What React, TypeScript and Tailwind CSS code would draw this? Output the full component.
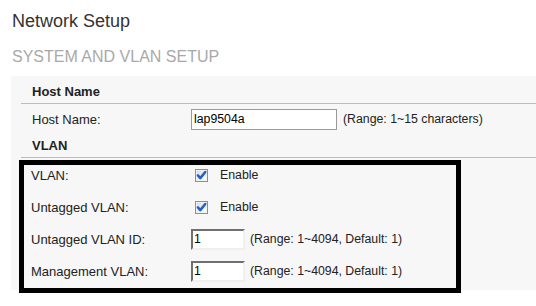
const FONT = { fontFamily: '"Liberation Sans", Arial, sans-serif' }

function CheckMark() {
  return (
    <svg width="13" height="13" viewBox="0 0 13 13" className="ml-[4px] shrink-0">
      <defs>
        <linearGradient id="cbg" x1="0" y1="0" x2="1" y2="1">
          <stop offset="0" stopColor="#dcdcdc" />
          <stop offset="1" stopColor="#ffffff" />
        </linearGradient>
      </defs>
      <rect x="0.5" y="0.5" width="12" height="12" fill="#f2f2f2" stroke="#8e8f8f" />
      <rect x="2" y="2" width="9" height="9" fill="url(#cbg)" />
      <path d="M2.9 6.4 L5.3 9.1 L10.3 3" fill="none" stroke="#1f5fd0" strokeWidth="2.5" strokeLinecap="round" strokeLinejoin="round" />
    </svg>
  )
}

function SmallInput({ value }: { value: string }) {
  return (
    <div className="w-[54px] h-[21px] bg-white border-2 border-t-[#6f6f6f] border-l-[#6f6f6f] border-r-[#f0f0f0] border-b-[#f0f0f0] pl-[1px] flex items-center text-[12.3px] text-black">
      {value}
    </div>
  )
}

function Row({ label, children }: { label: string; children: React.ReactNode }) {
  return (
    <div className="h-[21px] flex items-center">
      <div className="w-[160px] text-[13px] text-[#222]">{label}</div>
      {children}
    </div>
  )
}

export default function App() {
  return (
    <div className="w-[536px] h-[306px] bg-white overflow-hidden" style={FONT}>
      <h1 className="pt-[10px] pl-[12px] text-[18px] leading-[22px] text-[#333]">Network Setup</h1>
      <h2 className="mt-[15px] pl-[12px] text-[16px] leading-[20px] text-[#a9a9a9]">SYSTEM AND VLAN SETUP</h2>

      <div className="mt-[9px] ml-[11px] h-[214px] bg-[#f7f7f7]">
        <div className="ml-[10px] pt-[8px] pb-[3px] pl-[11px] border-b border-[#bdbdbd] text-[13px] leading-[16px] font-bold text-[#222]">
          Host Name
        </div>
        <div className="pt-[5px] pl-[21px] h-[26px] flex items-center">
          <div className="w-[159px] text-[13px] text-[#222]">Host Name:</div>
          <div className="w-[146px] h-[21px] bg-white border border-[#9a9a9a] pl-[2px] flex items-center text-[12.3px] text-black">
            lap9504a
          </div>
          <span className="ml-[6px] text-[12.3px] text-[#222]">(Range: 1~15 characters)</span>
        </div>
        <div className="ml-[10px] mt-[8px] pb-[3px] pl-[11px] border-b border-[#bdbdbd] text-[13px] leading-[16px] font-bold text-[#222]">
          VLAN
        </div>

        <div className="mt-[2px] ml-[8px] w-[442px] border-[5px] border-black pl-[7px] pb-[6px] flex flex-col gap-[11px]">
          <Row label="VLAN:">
            <CheckMark />
            <span className="ml-[12px] text-[12.3px] text-[#222]">Enable</span>
          </Row>
          <Row label="Untagged VLAN:">
            <CheckMark />
            <span className="ml-[12px] text-[12.3px] text-[#222]">Enable</span>
          </Row>
          <Row label="Untagged VLAN ID:">
            <SmallInput value="1" />
            <span className="ml-[5px] text-[12.3px] text-[#222]">(Range: 1~4094, Default: 1)</span>
          </Row>
          <Row label="Management VLAN:">
            <SmallInput value="1" />
            <span className="ml-[5px] text-[12.3px] text-[#222]">(Range: 1~4094, Default: 1)</span>
          </Row>
        </div>
      </div>
    </div>
  )
}
